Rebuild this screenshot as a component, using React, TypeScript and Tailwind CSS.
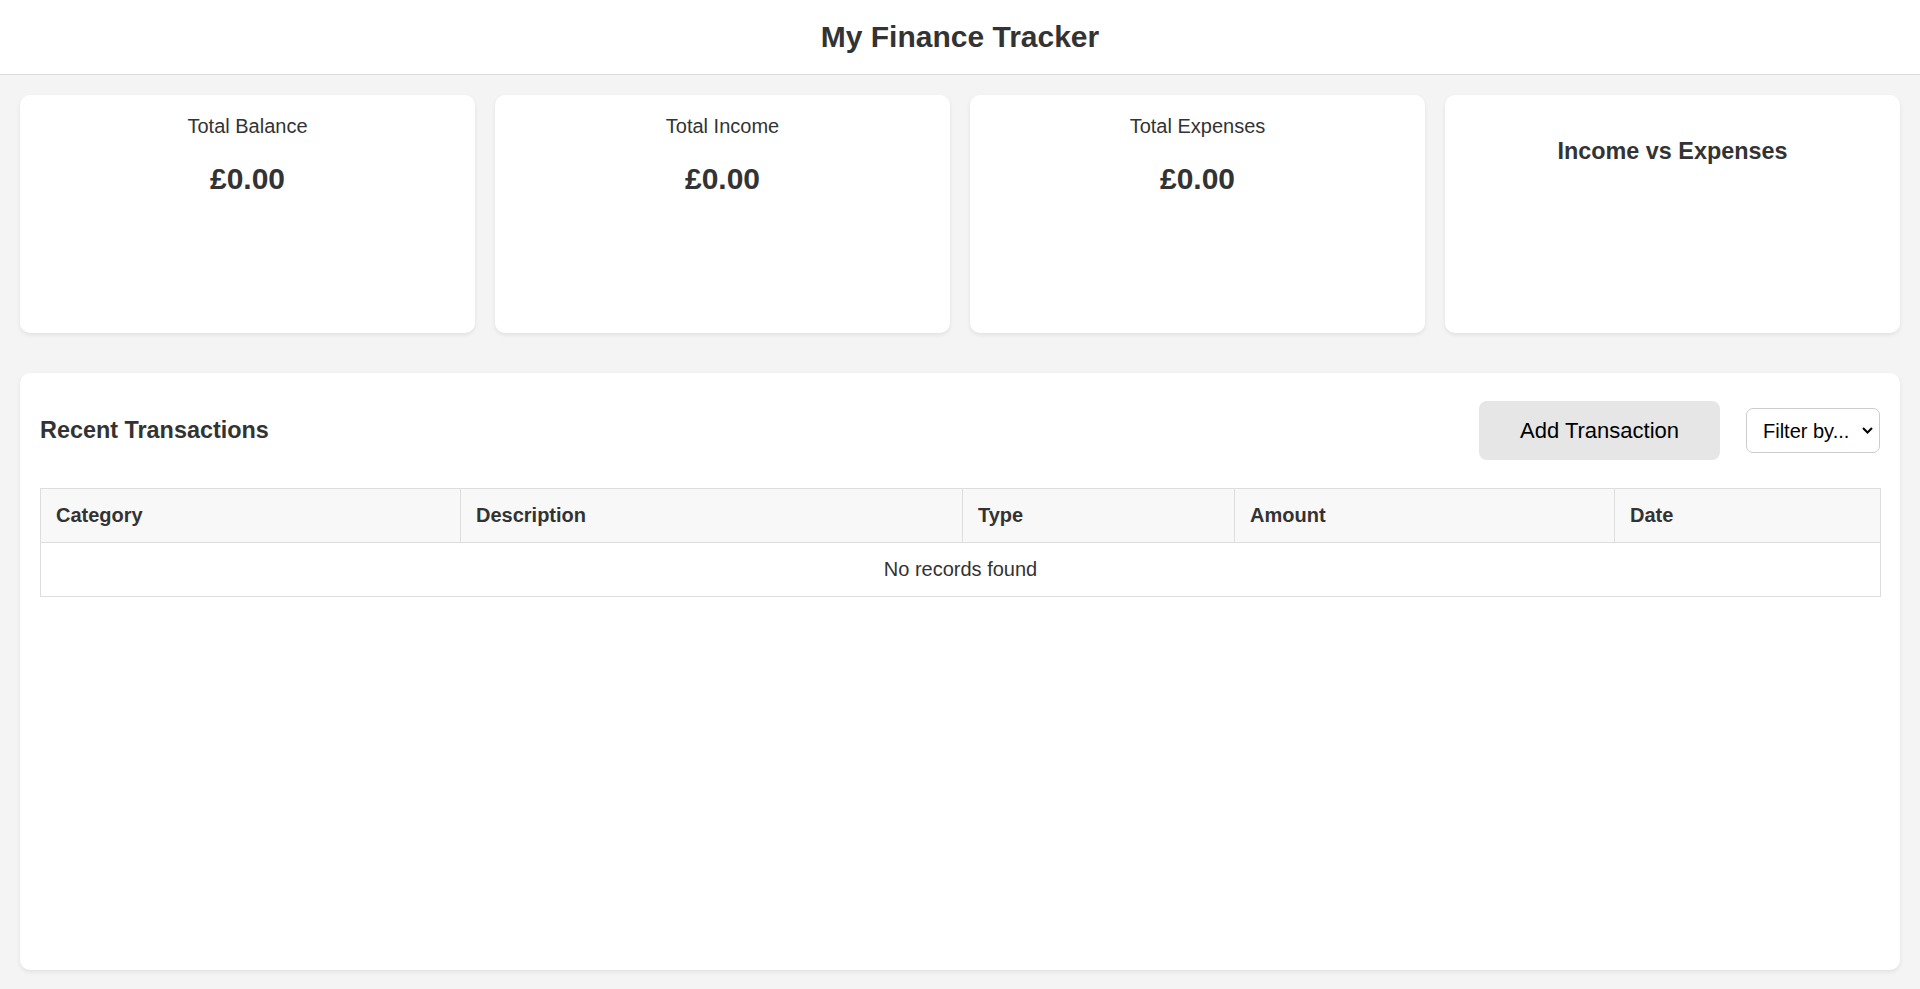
import { useState } from "react";

type Tx = {
  category: string;
  description: string;
  type: "income" | "expense";
  amount: number;
  date: string;
};

const gbp = (n: number) => "£" + n.toFixed(2);

function StatCard({ label, value }: { label: string; value: number }) {
  return (
    <div className="h-[238px] rounded-[10px] bg-white px-5 pt-[20px] text-center shadow-[0_2px_4px_rgba(0,0,0,0.08)]">
      <p className="text-[20px] leading-[23px]">{label}</p>
      <p className="mt-[24px] text-[30px] font-bold leading-[34px]">{gbp(value)}</p>
    </div>
  );
}

export default function App() {
  const [txs] = useState<Tx[]>([]);
  const [filter, setFilter] = useState("");

  const income = txs.filter((t) => t.type === "income").reduce((s, t) => s + t.amount, 0);
  const expenses = txs.filter((t) => t.type === "expense").reduce((s, t) => s + t.amount, 0);
  const shown = filter ? txs.filter((t) => t.type === filter) : txs;

  return (
    <div className="min-h-screen bg-[#f4f4f4] font-['Liberation_Sans',Arial,sans-serif] text-[#333]">
      <header className="h-[75px] border-b border-[#dddddd] bg-white pt-[19px] text-center">
        <h1 className="text-[30px] font-bold leading-[35px]">My Finance Tracker</h1>
      </header>

      <main className="px-5 pb-[19px] pt-5">
        <div className="grid grid-cols-4 gap-5">
          <StatCard label="Total Balance" value={income - expenses} />
          <StatCard label="Total Income" value={income} />
          <StatCard label="Total Expenses" value={expenses} />
          <div className="h-[238px] rounded-[10px] bg-white px-5 pt-5 text-center shadow-[0_2px_4px_rgba(0,0,0,0.08)]">
            <h3 className="mt-[23px] text-[23.4px] font-bold leading-[27px]">Income vs Expenses</h3>
          </div>
        </div>

        <section className="mt-10 h-[597px] rounded-[10px] bg-white px-5 pt-5 shadow-[0_2px_4px_rgba(0,0,0,0.08)]">
          <div className="flex items-center justify-between pt-[8px]">
            <h3 className="text-[23.4px] font-bold leading-[27px]">Recent Transactions</h3>
            <div className="flex items-center gap-[26px]">
              <button className="h-[59px] rounded-[8px] bg-[#e6e6e6] px-[41px] text-[22px] text-black">
                Add Transaction
              </button>
              <div className="relative h-[45px] w-[134px]">
                <select
                  value={filter}
                  onChange={(e) => setFilter(e.target.value)}
                  className="h-full w-full appearance-none rounded-[7px] border border-[#cccccc] bg-white pl-[16px] text-[20px] text-black outline-none"
                >
                  <option value="">Filter by...</option>
                  <option value="income">Income</option>
                  <option value="expense">Expense</option>
                </select>
                <svg
                  className="pointer-events-none absolute right-[7px] top-[19px]"
                  width="11"
                  height="7"
                  viewBox="0 0 11 7"
                  fill="none"
                >
                  <path d="M1 1l4.5 4.5L10 1" stroke="#000" strokeWidth="2" />
                </svg>
              </div>
            </div>
          </div>

          <table className="mt-[28px] w-full table-fixed border-collapse text-[20px]">
            <colgroup>
              <col className="w-[420px]" />
              <col className="w-[502px]" />
              <col className="w-[272px]" />
              <col className="w-[380px]" />
              <col className="w-[266px]" />
            </colgroup>
            <thead>
              <tr className="bg-[#f8f8f8]">
                {["Category", "Description", "Type", "Amount", "Date"].map((h) => (
                  <th
                    key={h}
                    className="border border-[#dddddd] px-[15px] py-[15px] text-left font-bold leading-[23px]"
                  >
                    {h}
                  </th>
                ))}
              </tr>
            </thead>
            <tbody>
              {shown.length === 0 ? (
                <tr>
                  <td colSpan={5} className="border border-[#dddddd] px-[15px] py-[15px] text-center leading-[23px]">
                    No records found
                  </td>
                </tr>
              ) : (
                shown.map((t, i) => (
                  <tr key={i}>
                    <td className="border border-[#dddddd] p-[15px]">{t.category}</td>
                    <td className="border border-[#dddddd] p-[15px]">{t.description}</td>
                    <td className="border border-[#dddddd] p-[15px]">{t.type}</td>
                    <td className="border border-[#dddddd] p-[15px]">{gbp(t.amount)}</td>
                    <td className="border border-[#dddddd] p-[15px]">{t.date}</td>
                  </tr>
                ))
              )}
            </tbody>
          </table>
        </section>
      </main>
    </div>
  );
}
